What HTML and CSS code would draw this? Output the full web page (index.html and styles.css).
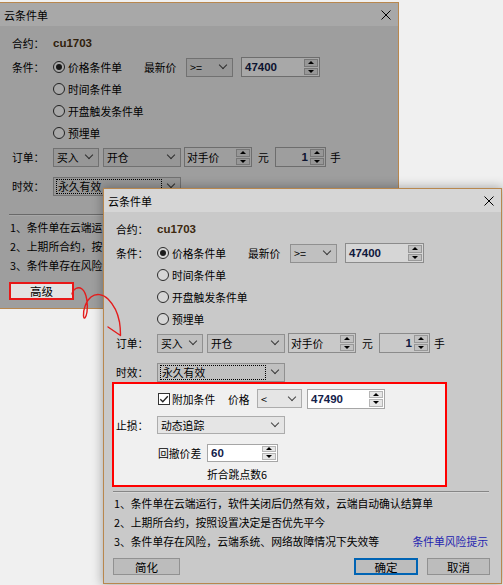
FILE: index.html
```html
<!DOCTYPE html>
<html lang="zh-CN">
<head>
  <meta charset="UTF-8" />
  <title>云条件单</title>
  <link rel="stylesheet" href="styles.css">
</head>
<body>
<div class="desk">

  <!-- 简化模式窗口（后面） -->
  <div class="dlg dlg-back">
    <div class="titlebar">
      <span>云条件单</span>
      <svg class="close" width="10" height="10" viewBox="0 0 10 10"><path d="M0.5,0.5 L9.5,9.5 M9.5,0.5 L0.5,9.5" stroke="#000" stroke-width="1"/></svg>
    </div>
    <div class="body">
      <div class="row first"><span class="lbl">合约：</span><b class="code">cu1703</b></div>
      <div class="row gap2">
        <span class="lbl">条件：</span>
        <span class="radio radio-main on"><i></i>价格条件单</span>
        <span class="last-lbl">最新价</span>
        <div class="combo w47">&gt;=</div>
        <div class="spin w79 ml8"><span class="val">47400</span><span class="arr"><i class="up"></i><i class="dn"></i></span></div>
      </div>
      <div class="row"><span class="lbl"></span><span class="radio"><i></i>时间条件单</span></div>
      <div class="row"><span class="lbl"></span><span class="radio"><i></i>开盘触发条件单</span></div>
      <div class="row"><span class="lbl"></span><span class="radio"><i></i>预埋单</span></div>
      <div class="row gap2">
        <span class="lbl">订单：</span>
        <div class="combo w46">买入</div>
        <div class="combo w78 ml4">开仓</div>
        <div class="spin ro w68 ml3"><span class="val txt">对手价</span><span class="arr"><i class="up"></i><i class="dn"></i></span></div>
        <span class="unit">元</span>
        <div class="spin ro w51"><span class="val r">1</span><span class="arr"><i class="up"></i><i class="dn"></i></span></div>
        <span class="hand">手</span>
      </div>
      <div class="row valid">
        <span class="lbl">时效：</span>
        <div class="combo w128"><span class="focus">永久有效</span></div>
      </div>
      <div class="sep back-sep"></div>
      <!-- 其余部分被前面的窗口挡住 -->
      <div class="notes back-notes">
        <p>1、条件单在云端运</p>
        <p>2、上期所合约，按</p>
        <p>3、条件单存在风险</p>
      </div>
      <div class="btns">
        <button class="btn w65 spot-btn">高级</button>
      </div>
    </div>
  </div>

  <!-- 高级模式窗口（前面） -->
  <div class="dlg dlg-front">
    <div class="titlebar">
      <span>云条件单</span>
      <svg class="close" width="10" height="10" viewBox="0 0 10 10"><path d="M0.5,0.5 L9.5,9.5 M9.5,0.5 L0.5,9.5" stroke="#000" stroke-width="1"/></svg>
    </div>
    <div class="body">
      <div class="row first"><span class="lbl">合约：</span><b class="code">cu1703</b></div>
      <div class="row gap2">
        <span class="lbl">条件：</span>
        <span class="radio radio-main on"><i></i>价格条件单</span>
        <span class="last-lbl">最新价</span>
        <div class="combo w47">&gt;=</div>
        <div class="spin w79 ml8"><span class="val">47400</span><span class="arr"><i class="up"></i><i class="dn"></i></span></div>
      </div>
      <div class="row"><span class="lbl"></span><span class="radio"><i></i>时间条件单</span></div>
      <div class="row"><span class="lbl"></span><span class="radio"><i></i>开盘触发条件单</span></div>
      <div class="row"><span class="lbl"></span><span class="radio"><i></i>预埋单</span></div>
      <div class="row gap2">
        <span class="lbl">订单：</span>
        <div class="combo w46">买入</div>
        <div class="combo w78 ml4">开仓</div>
        <div class="spin ro w68 ml3"><span class="val txt">对手价</span><span class="arr"><i class="up"></i><i class="dn"></i></span></div>
        <span class="unit">元</span>
        <div class="spin ro w51"><span class="val r">1</span><span class="arr"><i class="up"></i><i class="dn"></i></span></div>
        <span class="hand">手</span>
      </div>
      <div class="row valid">
        <span class="lbl">时效：</span>
        <div class="combo w128"><span class="focus">永久有效</span></div>
      </div>

      <!-- 止损设置 -->
      <div class="stoploss">
        <div class="row sl-1">
          <span class="lbl"></span>
          <span class="chk">
            <svg width="12" height="12" viewBox="0 0 12 12"><rect x="0.5" y="0.5" width="11" height="11" fill="#fff" stroke="#333"/><path d="M2.3,6.2 L4.8,8.7 L9.8,3.2" fill="none" stroke="#222" stroke-width="1.3"/></svg>
            附加条件
          </span>
          <span class="price-lbl">价格</span>
          <div class="combo w45">&lt;</div>
          <div class="spin w78 ml5"><span class="val">47490</span><span class="arr"><i class="up"></i><i class="dn"></i></span></div>
        </div>
        <div class="row sl-2">
          <span class="lbl">止损：</span>
          <div class="combo w128 h18">动态追踪</div>
        </div>
        <div class="row sl-3">
          <span class="lbl"></span>
          <span class="back-lbl">回撤价差</span>
          <div class="spin w71 h18"><span class="val">60</span><span class="arr"><i class="up"></i><i class="dn"></i></span></div>
        </div>
        <div class="row sl-4">
          <span class="lbl"></span>
          <span class="ticks">折合跳点数6</span>
        </div>
      </div>

      <div class="sep"></div>
      <div class="notes">
        <p>1、条件单在云端运行，软件关闭后仍然有效，云端自动确认结算单</p>
        <p>2、上期所合约，按照设置决定是否优先平今</p>
        <p class="last">3、条件单存在风险，云端系统、网络故障情况下失效等<a class="risk">条件单风险提示</a></p>
      </div>
      <div class="btns">
        <button class="btn w67">简化</button>
        <span class="fill"></span>
        <button class="btn w64 ok">确定</button>
        <button class="btn w63 ml9">取消</button>
      </div>
    </div>
  </div>

  <svg class="arrow" width="503" height="585" viewBox="0 0 503 585">
    <path d="M72,294 C73,289 78,286 82,289 C87,293 88,305 87,312 C86,318 84,320 83.5,316 C83,310 86,301 91,297 C96,293 103,294 108,299 C114,305 118,314 119.5,322 C120.3,327 120.5,331 120.5,335 M108,327 L120.5,335.5" fill="none" stroke="#e41c1c" stroke-width="1.4" stroke-linecap="round"/>
  </svg>
</div>
</body>
</html>
```

FILE: styles.css
```css
body {
  margin: 0;
  background: #f0f0f0;
  font-family: "Noto Sans CJK SC", "Noto Sans", sans-serif;
  font-size: 10.8px;
  color: #000;
}

.desk {
  position: relative;
  width: 503px;
  height: 585px;
  overflow: hidden;
}

/* windows */
.dlg {
  position: absolute;
  box-sizing: border-box;
  background: #f0f0f0;
  border: 1px solid #b8874e;
  overflow: hidden;
}

.dlg-back {
  left: -1px;
  top: 2px;
  width: 400px;
  height: 307px;
  z-index: 1;
}

.dlg-front {
  left: 103px;
  top: 188px;
  width: 399px;
  height: 396px;
  z-index: 2;
  box-shadow: 0 0 10px 1px rgba(0, 0, 0, 0.3);
}

.titlebar {
  height: 23px;
  background: #fff;
  display: flex;
  align-items: center;
  justify-content: space-between;
  padding: 0 7px 0 4px;
  font-size: 11px;
}

.body {
  padding: 6px 12px 0 12px;
}

.row {
  display: flex;
  align-items: center;
  height: 22px;
}

.row.gap2 { margin-top: 2px; }
.row.valid { height: 20px; margin-top: 8px; }

.lbl {
  width: 41px;
  flex: none;
}

.code {
  font: bold 11.5px "Liberation Sans", sans-serif;
  color: #4a3112;
}

/* radio buttons */
.radio {
  display: flex;
  align-items: center;
  gap: 3px;
}

.radio i {
  box-sizing: border-box;
  width: 12px;
  height: 12px;
  border: 1px solid #333;
  border-radius: 50%;
  background: #fff;
  display: flex;
  align-items: center;
  justify-content: center;
}

.radio.on i::after {
  content: "";
  width: 6px;
  height: 6px;
  border-radius: 50%;
  background: #222;
}

.radio-main { width: 91px; }
.last-lbl { width: 42px; }

/* combo boxes */
.combo {
  box-sizing: border-box;
  height: 19px;
  border: 1px solid #acacac;
  background: #e5e5e5;
  display: flex;
  align-items: center;
  padding-left: 3px;
  flex: none;
}

.combo::after {
  content: "";
  margin-left: auto;
  margin-right: 6px;
  width: 5px;
  height: 5px;
  border-right: 1px solid #444;
  border-bottom: 1px solid #444;
  transform: translateY(-2px) rotate(45deg);
}

.combo .focus {
  box-sizing: border-box;
  width: 106px;
  height: 15px;
  margin-left: -1px;
  border: 1px dotted #000;
  display: flex;
  align-items: center;
  padding-left: 1px;
}

/* spin edits */
.spin {
  box-sizing: border-box;
  height: 20px;
  border: 1px solid #a6a6a6;
  background: #fff;
  display: flex;
  flex: none;
}

.spin.ro { background: #f0f0f0; }

.spin .val {
  flex: 1;
  display: flex;
  align-items: center;
  padding-left: 3px;
  font: bold 11.5px "Liberation Sans", sans-serif;
  color: #13214a;
}

.spin .val.txt {
  font: 10.8px "Noto Sans CJK SC", sans-serif;
  color: #000;
  padding-left: 2px;
}

.spin .val.r {
  justify-content: flex-end;
  padding-right: 2px;
}

.spin .arr {
  width: 14px;
  display: flex;
  flex-direction: column;
  gap: 1px;
  padding: 1px 1px 1px 0;
}

.spin .arr i {
  flex: 1;
  background: #e6e6e6;
  border: 1px solid #b5b5b5;
  display: flex;
  align-items: center;
  justify-content: center;
}

.spin .arr i::before {
  content: "";
  border-left: 3px solid transparent;
  border-right: 3px solid transparent;
  border-bottom: 3px solid #000;
}

.spin .arr i.dn::before {
  border-bottom: 0;
  border-top: 3px solid #000;
}

.w45 { width: 45px; }
.w46 { width: 46px; }
.w47 { width: 47px; }
.w51 { width: 51px; }
.w63 { width: 63px; }
.w64 { width: 64px; }
.w65 { width: 65px; }
.w67 { width: 67px; }
.w68 { width: 68px; }
.w71 { width: 71px; }
.w78 { width: 78px; }
.w79 { width: 79px; }
.w128 { width: 128px; }
.h18 { height: 18px; }
.ml3 { margin-left: 3px; }
.ml4 { margin-left: 4px; }
.ml5 { margin-left: 5px; }
.ml8 { margin-left: 8px; }
.ml9 { margin-left: 9px; }

.unit { margin-left: 6px; width: 17px; }
.hand { margin-left: 4px; }

/* stop loss block, left bright while the rest of the window is dimmed */
.stoploss {
  position: relative;
  z-index: 1;
  box-sizing: border-box;
  width: 335px;
  height: 105px;
  margin-left: -4px;
  padding: 4px 0 0 2px;
  border: 2px solid #f00;
  background: #f0f0f0;
  box-shadow: 0 0 0 1000px rgba(0, 0, 0, 0.16);
}

.stoploss .row { height: 21px; }
.stoploss .sl-2 { margin-top: 5px; }
.stoploss .sl-3 { margin-top: 7px; }
.stoploss .sl-4 { margin-top: 2px; height: 18px; }

.chk {
  display: flex;
  align-items: center;
  gap: 2px;
  width: 70px;
  margin-left: 1px;
}

.price-lbl { width: 29px; }
.back-lbl { width: 49px; margin-left: 1px; }
.ticks { margin-left: 50px; }

.sep {
  margin: 4px 0 0 -3px;
  border-top: 1px solid #a0a0a0;
  border-bottom: 1px solid #fff;
}

.back-sep { margin-top: 18px; }

.notes {
  margin: 1px 0 0 -2px;
}

.back-notes { margin-top: 2px; }

.notes p {
  margin: 0;
  height: 19px;
  line-height: 19px;
  white-space: nowrap;
}

.notes p.last {
  display: flex;
  justify-content: space-between;
  margin-right: 1px;
}

.risk {
  color: #2a2ad2;
}

/* buttons */
.btns {
  display: flex;
  margin: 7px -1px 0 -3px;
}

.fill { flex: 1; }

.btn {
  box-sizing: border-box;
  height: 17px;
  padding: 0;
  border: 1px solid #adadad;
  background: #e1e1e1;
  font: 11.5px "Noto Sans CJK SC", sans-serif;
  color: #000;
  display: flex;
  align-items: center;
  justify-content: center;
}

.btn.ok {
  border-color: #0078d7;
  box-shadow: inset 0 0 0 1px #0078d7;
}

.spot-btn {
  position: relative;
  z-index: 1;
  height: 18px;
  border: 2px solid #e81818;
  background: #e3e3e3;
  box-shadow: 0 0 0 1000px rgba(0, 0, 0, 0.34);
}

.arrow {
  position: absolute;
  left: 0;
  top: 0;
  z-index: 3;
  pointer-events: none;
}
```
